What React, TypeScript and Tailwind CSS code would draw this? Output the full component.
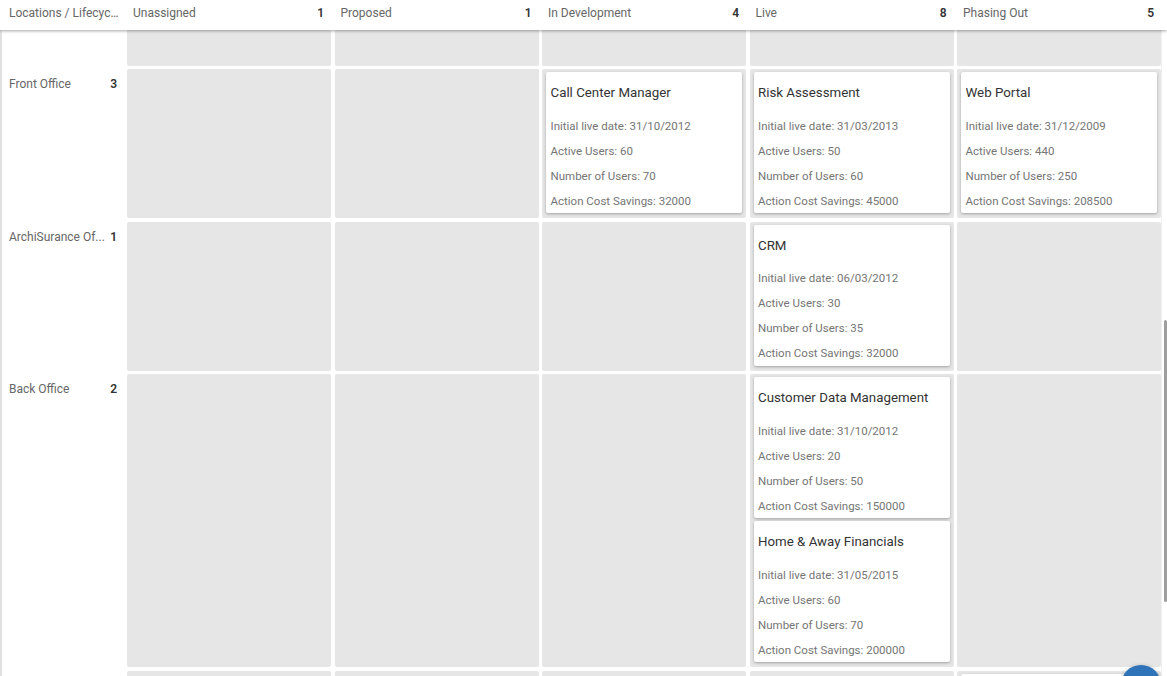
type Card = {
  title: string;
  date: string;
  active: number;
  users: number;
  savings: number;
};

type Row = {
  label: string;
  count: number;
  cells: (Card | null)[][];
};

const columns = [
  { name: "Unassigned", count: 1 },
  { name: "Proposed", count: 1 },
  { name: "In Development", count: 4 },
  { name: "Live", count: 8 },
  { name: "Phasing Out", count: 5 },
];

// null = card scrolled below the fold (only its top edge shows)
const rows: Row[] = [
  {
    label: "Front Office",
    count: 3,
    cells: [
      [],
      [],
      [{ title: "Call Center Manager", date: "31/10/2012", active: 60, users: 70, savings: 32000 }],
      [{ title: "Risk Assessment", date: "31/03/2013", active: 50, users: 60, savings: 45000 }],
      [{ title: "Web Portal", date: "31/12/2009", active: 440, users: 250, savings: 208500 }],
    ],
  },
  {
    label: "ArchiSurance Of...",
    count: 1,
    cells: [
      [],
      [],
      [],
      [{ title: "CRM", date: "06/03/2012", active: 30, users: 35, savings: 32000 }],
      [],
    ],
  },
  {
    label: "Back Office",
    count: 2,
    cells: [
      [],
      [],
      [],
      [
        { title: "Customer Data Management", date: "31/10/2012", active: 20, users: 50, savings: 150000 },
        { title: "Home & Away Financials", date: "31/05/2015", active: 60, users: 70, savings: 200000 },
      ],
      [],
    ],
  },
  {
    label: "",
    count: 0,
    cells: [[], [], [], [], [null]],
  },
];

function AppCard({ card }: { card: Card | null }) {
  if (!card) {
    return <div className="bg-white rounded-[2px] shadow-[0_1px_3px_rgba(0,0,0,0.3)] h-[141px] shrink-0" />;
  }
  return (
    <div className="bg-white rounded-[2px] shadow-[0_1px_3px_rgba(0,0,0,0.3)] pt-[11px] px-[4.5px] h-[141px] shrink-0">
      <div className="h-[20px] leading-[20px] text-[13.3px] text-[#333] whitespace-nowrap overflow-hidden">
        {card.title}
      </div>
      <div className="mt-[10.5px] text-[11.5px] text-[#757575]">
        <div className="h-[25px] leading-[25px]">Initial live date: {card.date}</div>
        <div className="h-[25px] leading-[25px]">Active Users: {card.active}</div>
        <div className="h-[25px] leading-[25px]">Number of Users: {card.users}</div>
        <div className="h-[25px] leading-[25px]">Action Cost Savings: {card.savings}</div>
      </div>
    </div>
  );
}

export default function App() {
  return (
    <div className="relative h-[676px] w-[1167px] overflow-hidden bg-white font-['Roboto','Liberation_Sans',sans-serif]">
      {/* header */}
      <div className="relative z-10 flex h-[30px] bg-white shadow-[0_1px_3px_rgba(0,0,0,0.35)]">
        <div className="w-[127px] shrink-0 pl-[9px] pr-[8px] pt-[5px] text-[12px] leading-4 text-[#666] truncate">
          Locations / Lifecycle
        </div>
        <div className="flex gap-[3.5px]">
          {columns.map((c) => (
            <div key={c.name} className="w-[204px] flex justify-between pl-[6px] pr-[7px] pt-[5px] text-[12px] leading-4">
              <span className="text-[#666]">{c.name}</span>
              <span className="font-semibold text-[#333]">{c.count}</span>
            </div>
          ))}
        </div>
      </div>

      <div className="flex">
        <div className="w-[1161px] flex flex-col gap-[3.5px] border-l-2 border-[#e0e0e0]">
          {/* partially scrolled row */}
          <div className="flex h-[35.5px]">
            <div className="w-[125px] shrink-0" />
            <div className="flex gap-[3.5px]">
              {columns.map((c) => (
                <div key={c.name} className="w-[204px] bg-[#e6e6e6] rounded-b-[2px]" />
              ))}
            </div>
          </div>

          {rows.map((row, i) => (
            <div key={i} className="flex">
              <div className="w-[125px] shrink-0 flex justify-between pl-[7px] pr-[10px] pt-[7px] text-[12px] leading-4">
                <span className="text-[#666] truncate">{row.label}</span>
                {row.label && <span className="font-semibold text-[#333] pl-1">{row.count}</span>}
              </div>
              <div className="flex gap-[3.5px]">
                {row.cells.map((cards, j) => (
                  <div
                    key={j}
                    className="w-[204px] min-h-[149px] bg-[#e6e6e6] rounded-[2px] px-[4px] pt-[3px] pb-[5px] flex flex-col gap-[3px]"
                  >
                    {cards.map((card, k) => (
                      <AppCard key={k} card={card} />
                    ))}
                  </div>
                ))}
              </div>
            </div>
          ))}
        </div>

        {/* scrollbar */}
        <div className="w-[6px] shrink-0 pl-[2px] border-l border-[#f0f0f0]">
          <div className="mt-[290px] h-[282px] w-[3px] bg-[#9e9e9e] rounded-full" />
        </div>
      </div>

      <div className="absolute left-[1121px] top-[665px] h-10 w-10 rounded-full bg-[#2f74b9] shadow-[0_1px_4px_rgba(0,0,0,0.3)]" />
    </div>
  );
}
